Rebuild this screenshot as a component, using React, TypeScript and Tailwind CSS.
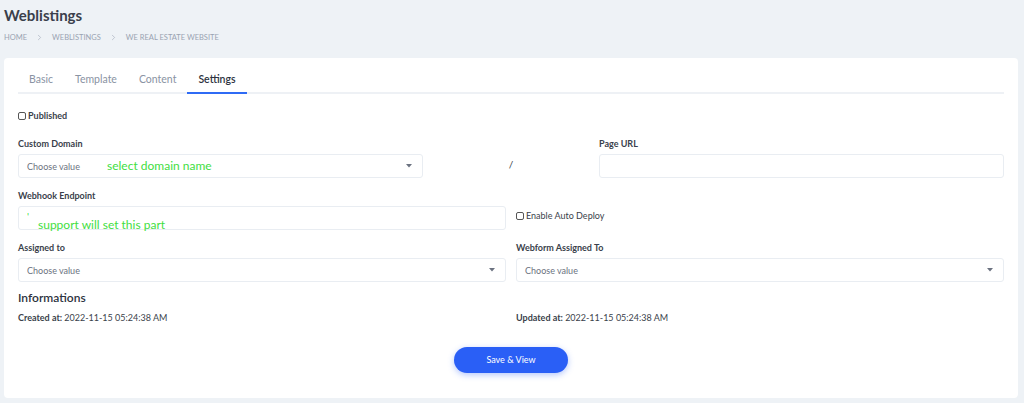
import { ChevronRight } from 'lucide-react';

function Caret() {
  return (
    <svg width="6" height="4" viewBox="0 0 6 4" className="shrink-0">
      <path d="M0 0 L6 0 L3 3.5 Z" fill="#6b7280" />
    </svg>
  );
}

function Label({ children }: { children: React.ReactNode }) {
  return <div className="text-[9px] font-bold text-[#3a3f4b] leading-none">{children}</div>;
}

function SelectBox({ extra }: { extra?: React.ReactNode }) {
  return (
    <div className="h-6 border border-[#e9edf2] rounded-[3px] bg-white flex items-center pl-2 pr-2.5">
      <span className="text-[9px] text-[#6b7280] w-[80px] shrink-0 leading-none">Choose value</span>
      <div className="flex-1 min-w-0 flex items-center">{extra}</div>
      <Caret />
    </div>
  );
}

export default function App() {
  const tabs = ['Basic', 'Template', 'Content', 'Settings'];

  return (
    <div
      className="w-[1024px] h-[403px] bg-[#eef2f6] pl-1 pr-[6px] pt-[7px] overflow-hidden"
      style={{ fontFamily: 'Lato, "Open Sans", sans-serif' }}
    >
      <h1 className="text-[15px] font-bold text-[#3a3f4b] leading-4">Weblistings</h1>
      <div className="flex items-center gap-[8px] mt-[10px] text-[7.5px] text-[#9aa3b2] uppercase leading-none">
        <span>Home</span>
        <ChevronRight size={9} strokeWidth={1.5} />
        <span>Weblistings</span>
        <ChevronRight size={9} strokeWidth={1.5} />
        <span>We Real Estate Website</span>
      </div>

      <div className="mt-[16px] h-[340px] bg-white rounded-[4px] px-[14px]">
        {/* tabs */}
        <div className="flex border-b-2 border-[#eef1f5] pt-[14px]">
          {tabs.map((t) => (
            <div
              key={t}
              className={
                t === 'Settings'
                  ? 'px-[11px] pb-[4px] text-[10.5px] font-semibold text-[#2d3340] border-b-2 border-[#2f6bf5] -mb-[2px]'
                  : 'px-[11px] pb-[4px] text-[10.5px] text-[#8a93a3]'
              }
            >
              {t}
            </div>
          ))}
        </div>

        <label className="flex items-center gap-[2px] mt-[15px] text-[9px] font-bold text-[#3a3f4b]">
          <span className="w-[8px] h-[8px] border border-[#555] rounded-[2px]" />
          Published
        </label>

        {/* custom domain row */}
        <div className="grid grid-cols-[405px_1fr_405px] mt-[17px]">
          <div className="flex flex-col gap-[6px]">
            <Label>Custom Domain</Label>
            <SelectBox
              extra={<span className="text-[12px] text-[#3fde3f] leading-none">select domain name</span>}
            />
          </div>
          <div className="flex items-end justify-center pb-[6px] text-[10px] text-[#3a3f4b]">/</div>
          <div className="flex flex-col gap-[6px]">
            <Label>Page URL</Label>
            <div className="h-6 border border-[#e9edf2] rounded-[3px]" />
          </div>
        </div>

        {/* webhook row */}
        <div className="grid grid-cols-2 gap-[10px] mt-[13px]">
          <div className="flex flex-col gap-[6px]">
            <Label>Webhook Endpoint</Label>
            <div className="h-6 border border-[#e9edf2] rounded-[3px] relative">
              <span className="absolute left-[8px] top-[4px] text-[10px] text-[#3fde3f] leading-none">'</span>
              <span className="absolute left-[19px] top-[10px] text-[12px] text-[#3fde3f] leading-4">
                support will set this part
              </span>
            </div>
          </div>
          <div className="flex items-end pb-[8px]">
            <label className="flex items-center gap-[2px] text-[9px] text-[#3a3f4b]">
              <span className="w-[8px] h-[8px] border border-[#555] rounded-[2px]" />
              Enable Auto Deploy
            </label>
          </div>
        </div>

        {/* assigned row */}
        <div className="grid grid-cols-2 gap-[10px] mt-[13px]">
          <div className="flex flex-col gap-[6px]">
            <Label>Assigned to</Label>
            <SelectBox />
          </div>
          <div className="flex flex-col gap-[6px]">
            <Label>Webform Assigned To</Label>
            <SelectBox />
          </div>
        </div>

        <div className="mt-[8px] text-[12px] font-semibold text-[#2d3340] leading-4">Informations</div>
        <div className="grid grid-cols-2 gap-[10px] mt-[5px] text-[9px] text-[#3a3f4b]">
          <div>
            <span className="font-bold">Created at:</span> 2022-11-15 05:24:38 AM
          </div>
          <div>
            <span className="font-bold">Updated at:</span> 2022-11-15 05:24:38 AM
          </div>
        </div>

        <div className="flex justify-center mt-[22px]">
          <button className="w-[114px] h-[26px] rounded-full bg-[#2a5ff6] text-white text-[9px] shadow-[0_2px_6px_rgba(42,95,246,0.35)]">
            Save &amp; View
          </button>
        </div>
      </div>
    </div>
  );
}
